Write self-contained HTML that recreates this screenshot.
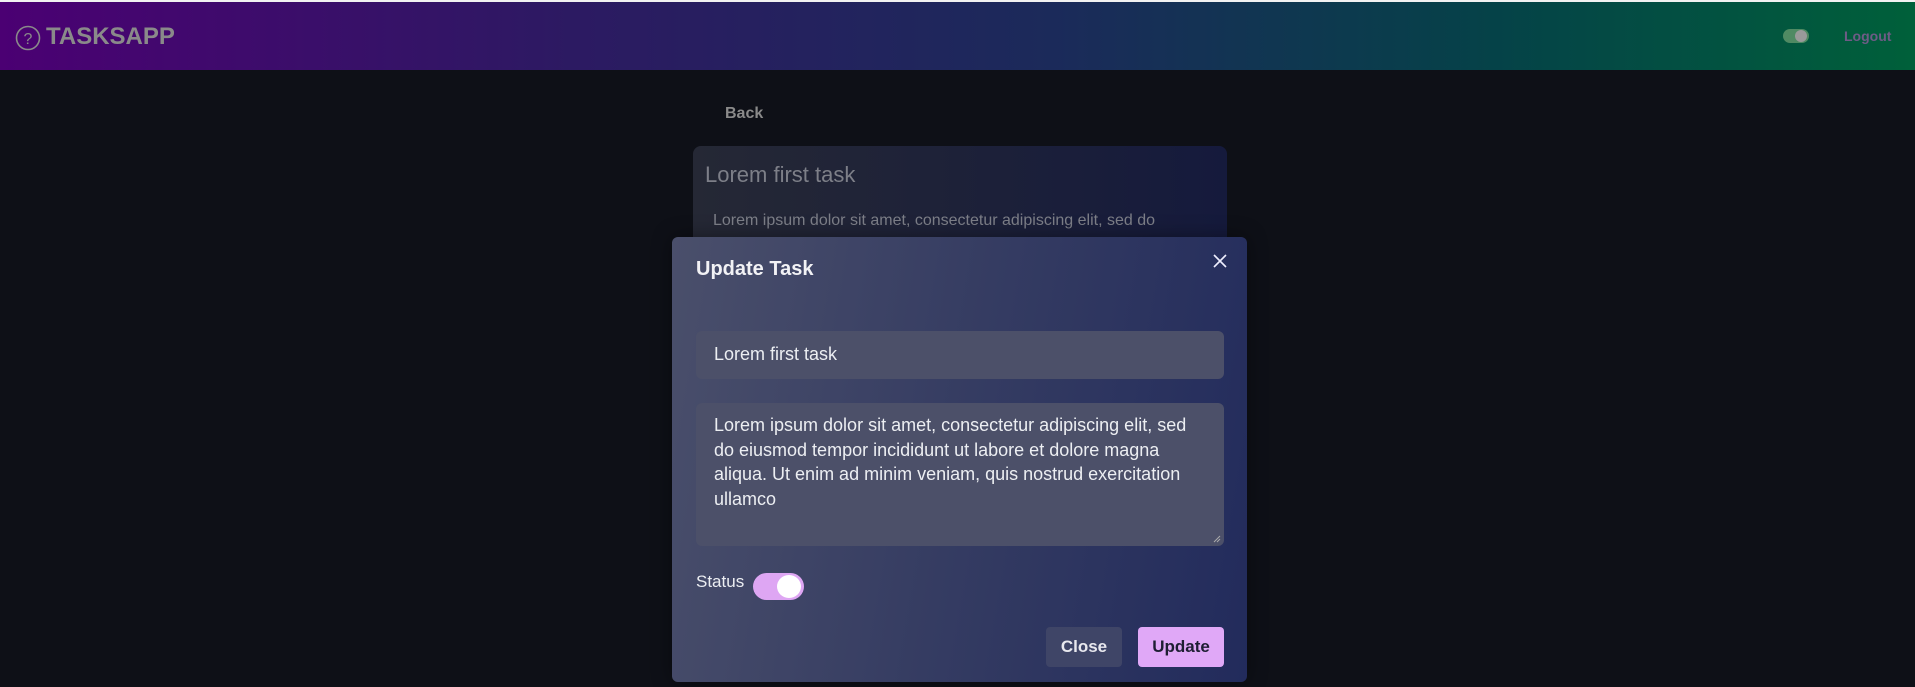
<!DOCTYPE html>
<html><head><meta charset="utf-8"><style>
*{box-sizing:border-box;margin:0;padding:0}
body{width:1915px;height:687px;overflow:hidden;background:#0e1017;font-family:"Liberation Sans",sans-serif;position:relative}
.top{position:absolute;left:0;top:0;width:1915px;height:2px;background:#f2f2f2}
.hdr{position:absolute;left:0;top:2px;width:1915px;height:68px;background:linear-gradient(90deg,#4b0073 0%,#2c1a62 30%,#1b2a5a 55%,#054248 78%,#00603a 100%)}
.abs{position:absolute}
.card{left:693px;top:146px;width:534px;height:200px;border-radius:8px;background:linear-gradient(90deg,#252835,#151a3c)}
.modal{left:672px;top:237px;width:575px;height:445px;border-radius:6px;background:linear-gradient(100deg,#4a4f6b 0%,#353c62 50%,#222b5c 100%);box-shadow:0 0 20px rgba(0,0,0,.4)}
.inp{background:#4c5069;border-radius:6px;color:#eceef2;font-size:18px}
</style></head><body>
<div class="top"></div>
<div class="hdr"></div>
<svg class="abs" style="left:15px;top:25px" width="26" height="26" viewBox="0 0 26 26"><circle cx="13" cy="13" r="11.5" fill="none" stroke="#8a8a8a" stroke-width="1.6"/><text x="13" y="19" text-anchor="middle" font-family="Liberation Sans" font-size="16" fill="#8a8a8a">?</text></svg>
<div class="abs" style="left:46px;top:23px;font-size:24px;font-weight:bold;color:#8a8a8a">TASKSAPP</div>
<div class="abs" style="left:1783px;top:29px;width:26px;height:14px;border-radius:8px;background:#4f8a63"></div>
<div class="abs" style="left:1795px;top:30px;width:12px;height:12px;border-radius:50%;background:#9a9a9a"></div>
<div class="abs" style="left:1844px;top:28px;font-size:14px;font-weight:bold;color:#6e5b86">Logout</div>
<div class="abs" style="left:725px;top:105px;font-size:16px;font-weight:bold;color:#8a8a8a">Back</div>
<div class="abs card"></div>
<div class="abs" style="left:705px;top:162px;font-size:22px;color:#7d7f88">Lorem first task</div>
<div class="abs" style="left:713px;top:209px;font-size:16px;color:#7d7f88;line-height:24px;width:500px">Lorem ipsum dolor sit amet, consectetur adipiscing elit, sed do eiusmod tempor incididunt ut labore et dolore magna aliqua</div>
<div class="abs modal"></div>
<div class="abs" style="left:696px;top:258px;font-size:20px;font-weight:bold;color:#f2f2f5">Update Task</div>
<svg class="abs" style="left:1213px;top:254px" width="14" height="14" viewBox="0 0 14 14"><path d="M1 1L13 13M13 1L1 13" stroke="#eef" stroke-width="1.6"/></svg>
<div class="abs inp" style="left:696px;top:331px;width:528px;height:48px;padding:13px 18px">Lorem first task</div>
<div class="abs inp" style="left:696px;top:403px;width:528px;height:143px;padding:10px 18px;line-height:24.5px">Lorem ipsum dolor sit amet, consectetur adipiscing elit, sed do eiusmod tempor incididunt ut labore et dolore magna aliqua. Ut enim ad minim veniam, quis nostrud exercitation ullamco</div>
<svg class="abs" style="left:1213px;top:535px" width="8" height="8"><path d="M1 7L7 1M4 7L7 4" stroke="#aaa" stroke-width="1"/></svg>
<div class="abs" style="left:696px;top:572px;font-size:17px;color:#eceef2">Status</div>
<div class="abs" style="left:753px;top:573px;width:51px;height:27px;border-radius:14px;background:#dea6f3"></div>
<div class="abs" style="left:777px;top:575px;width:24px;height:23px;border-radius:50%;background:#fff"></div>
<div class="abs" style="left:1046px;top:627px;width:76px;height:40px;border-radius:4px;background:#3f4567;color:#e8e8ee;font-size:17px;font-weight:bold;text-align:center;line-height:40px">Close</div>
<div class="abs" style="left:1138px;top:627px;width:86px;height:40px;border-radius:4px;background:#e0a8f7;color:#1e1e33;font-size:17px;font-weight:bold;text-align:center;line-height:40px">Update</div>
</body></html>
